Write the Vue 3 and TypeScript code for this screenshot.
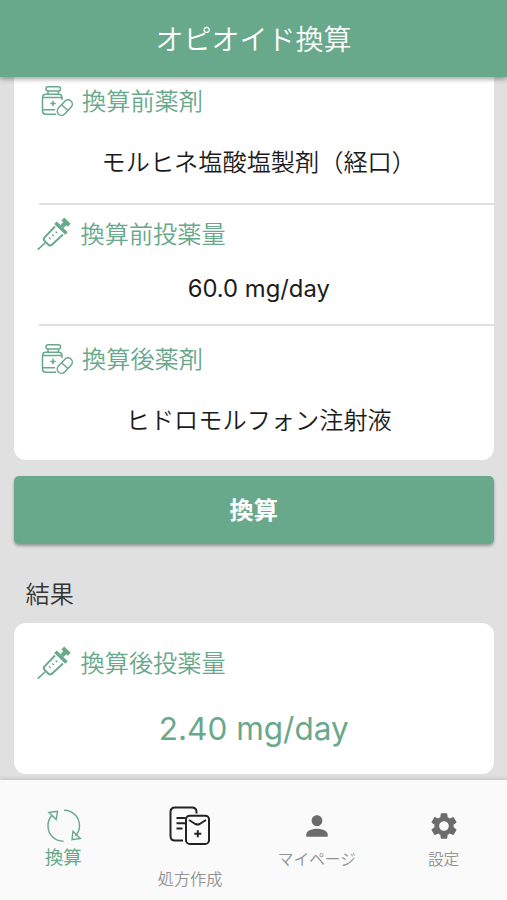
<script setup lang="ts">
import { ref } from 'vue'

interface Field {
  kind: 'drug' | 'dose'
  label: string
  value: string
}

const fields = ref<Field[]>([
  { kind: 'drug', label: '換算前薬剤', value: 'モルヒネ塩酸塩製剤（経口）' },
  { kind: 'dose', label: '換算前投薬量', value: '60.0 mg/day' },
  { kind: 'drug', label: '換算後薬剤', value: 'ヒドロモルフォン注射液' },
])
const result = ref('2.40 mg/day')
</script>

<template>
  <div class="screen">
    <header class="app-bar"><h1>オピオイド換算</h1></header>

    <main class="content">
      <section class="card inputs">
        <div v-for="(field, i) in fields" :key="field.label" class="field" :class="['field-' + i, field.kind]">
          <div class="label">
            <svg v-if="field.kind === 'drug'" class="icon" viewBox="0 0 34 32">
              <rect x="6" y="1.8" width="14.5" height="4.2" rx="2" />
              <path d="M8 6v3.2M18.5 6v3.2M22 15v-2.3q0-3.5-3.5-3.5H6q-3.500 0-3.500 3.500V26q0 3.200 3.200 3.200H16M2.500 12.500H22M2.500 24.800H15M13 15.800v5.400M10.300 18.500h5.400" />
              <rect x="15.800" y="18.300" width="18" height="8.600" rx="4.300" transform="rotate(-47 24.800 22.600)" />
              <path d="m21.600 19.700 6.300 5.800" />
            </svg>
            <svg v-else class="icon" viewBox="0 0 36 36">
              <path d="M.8 33.700 8.500 26.500" stroke-width="1.700" />
              <path d="M18 10.500 7.800 21.200q-2 2 0 4l3.400 3.300q2 2 4 0L26 18.500" stroke-width="1.900" />
              <path d="m18.500 6.800 11 10.700" stroke-width="3.600" />
              <path d="m25 10.500 4-4" stroke-width="4.500" />
              <path d="m25.800 3 6.400 6.200" stroke-width="4" />
              <path d="m12 21.500 1.600 1.600M15.300 18.500l1.600 1.600M18.600 15.500l1.600 1.600" stroke-width="1.300" />
            </svg>
            <span>{{ field.label }}</span>
          </div>
          <p class="value">{{ field.value }}</p>
        </div>
      </section>

      <button class="convert" type="button">換算</button>

      <h2>結果</h2>
      <section class="card result">
        <div class="label">
          <svg class="icon" viewBox="0 0 36 36">
            <path d="M.8 33.700 8.500 26.500" stroke-width="1.700" />
            <path d="M18 10.500 7.800 21.200q-2 2 0 4l3.400 3.300q2 2 4 0L26 18.500" stroke-width="1.900" />
            <path d="m18.500 6.800 11 10.700" stroke-width="3.600" />
            <path d="m25 10.500 4-4" stroke-width="4.500" />
            <path d="m25.800 3 6.400 6.200" stroke-width="4" />
            <path d="m12 21.500 1.600 1.600M15.300 18.500l1.600 1.600M18.600 15.500l1.600 1.600" stroke-width="1.300" />
          </svg>
          <span>換算後投薬量</span>
        </div>
        <p class="value">{{ result }}</p>
      </section>
    </main>

    <nav class="tabs">
      <a class="tab active">
        <svg class="cycle" viewBox="0 0 36 36">
          <path d="M18 2.200c9 0 15.500 6.800 15.500 15.500 0 4-1.500 7.500-4 10.300M17.500 33.200C8.500 33.200 2 26.500 2 17.800c0-4.200 1.600-8 4.300-10.800" />
          <path d="m3 4.500 8.500-1.200-1.300 8.200zM27 23.300l-1 8.400 8.300-1.200z" />
        </svg>
        <span>換算</span>
      </a>
      <a class="tab prescription">
        <svg class="docs" viewBox="0 0 44 42">
          <path d="M15 35.500H7q-4.500 0-4.500-4.500V7q0-4.500 4.500-4.500h17q4.500 0 4.500 4.500v1.500M8.500 13h9M8.500 18.200H17M8.500 23.500h6" />
          <rect x="18" y="10.700" width="23" height="28.300" rx="3.800" />
          <path d="m21 15 6.300 4q2.200 1.200 4.400 0l6.300-4M29.800 25.200v7M26.300 28.700h7" />
        </svg>
        <span>処方作成</span>
      </a>
      <a class="tab">
        <svg class="material" viewBox="0 0 24 24">
          <path d="M12 12c2.210 0 4-1.790 4-4s-1.790-4-4-4-4 1.790-4 4 1.790 4 4 4zm0 2c-2.670 0-8 1.340-8 4v2h16v-2c0-2.660-5.330-4-8-4z" />
        </svg>
        <span>マイページ</span>
      </a>
      <a class="tab">
        <svg class="material" viewBox="0 0 24 24">
          <path d="M19.140 12.940c.04-.3.060-.61.060-.94s-.02-.64-.07-.94l2.030-1.580c.18-.14.230-.41.120-.61l-1.920-3.320c-.12-.22-.37-.29-.59-.22l-2.390.96c-.5-.38-1.030-.7-1.620-.94l-.36-2.540c-.04-.24-.24-.41-.48-.41h-3.840c-.24 0-.43.170-.47.410l-.36 2.540c-.59.240-1.130.570-1.620.940l-2.390-.96c-.22-.08-.47 0-.59.220L2.740 8.870c-.12.210-.08.470.120.610l2.030 1.580c-.05.300-.09.630-.09.940s.02.640.070.940l-2.030 1.580c-.18.140-.23.410-.12.610l1.920 3.320c.12.220.37.290.59.220l2.390-.96c.5.380 1.030.700 1.620.940l.36 2.540c.05.240.24.410.48.410h3.840c.24 0 .44-.17.470-.41l.36-2.540c.59-.24 1.130-.56 1.620-.94l2.390.96c.22.080.47 0 .59-.22l1.920-3.320c.12-.22.070-.47-.12-.61l-2.010-1.580zM12 15.600c-1.980 0-3.600-1.620-3.600-3.600s1.620-3.600 3.600-3.600 3.600 1.620 3.600 3.600-1.620 3.600-3.600 3.600z" />
        </svg>
        <span>設定</span>
      </a>
    </nav>
  </div>
</template>

<style>
body {
  margin: 0;
  background: #e0e0e0;
}
</style>

<style scoped>
.screen {
  display: flex;
  flex-direction: column;
  width: 100%;
  height: 900px;
  overflow: hidden;
  background: #e0e0e0;
  font-family: Inter, "Noto Sans CJK JP", sans-serif;
}
h1, h2, p { margin: 0; font-weight: 400; }
.app-bar {
  z-index: 1;
  flex: none;
  box-sizing: border-box;
  height: 77px;
  padding-top: 20px;
  background: #68a88b;
  box-shadow: 0 2px 5px rgba(0, 0, 0, .38);
  text-align: center;
}
h1 { color: #fff; font-size: 28px; font-weight: 350; line-height: 40px; }
.content {
  flex: 1;
  min-height: 0;
  padding: 0 13.500px 0 14px;
}
.card { background: #fff; overflow: hidden; }
.inputs { height: 383px; border-radius: 0 0 12px 12px; }
.field {
  box-sizing: border-box;
  margin-left: 25px;
}
.field-0 { height: 128px; padding-top: 7px; border-bottom: 2px solid #e0e0e0; }
.field-1 { height: 121px; padding-top: 12px; border-bottom: 2px solid #e0e0e0; }
.field-2 { height: 134px; padding-top: 16px; }
.label {
  display: flex;
  align-items: center;
  gap: 8px;
  height: 36px;
  color: #68a88b;
  font-size: 24.200px;
  font-weight: 350;
  line-height: 36px;
}
.icon {
  flex: none;
  width: 36px;
  height: 36px;
  margin: -2px 0 0 -2.500px;
  fill: none;
  stroke: #68a88b;
  stroke-width: 1.500;
}
.drug .icon { width: 34px; height: 32px; margin-left: 1px; }
.value {
  margin-left: -25px;
  padding-left: 10px;
  color: #1c1c1c;
  font-size: 24.200px;
  line-height: 36px;
  text-align: center;
}
.field-0 .value, .field-2 .value { padding-top: 25px; font-weight: 350; }
.field-1 .value { padding-top: 18px; font-size: 23.800px; }
.convert {
  display: block;
  width: 100%;
  height: 68px;
  margin-top: 16px;
  padding: 1px 0 0;
  border: 0;
  border-radius: 5px;
  background: #68a88b;
  box-shadow: 0 2px 3px rgba(0, 0, 0, .32);
  color: #fff;
  font: 700 24.200px/67px Inter, "Noto Sans CJK JP", sans-serif;
}
h2 {
  height: 36px;
  margin: 33px 0 10px 11.500px;
  color: #363636;
  font-size: 24.200px;
  font-weight: 350;
  line-height: 36px;
}
.result {
  box-sizing: border-box;
  height: 151px;
  padding: 23px 0 0 25px;
  border-radius: 12px;
}
.result .value {
  padding: 23px 0 0;
  color: #68a88b;
  font-size: 31.500px;
  line-height: 48px;
}
.tabs {
  z-index: 1;
  display: grid;
  grid-template-columns: repeat(4, 1fr);
  flex: none;
  height: 120px;
  background: #fafafa;
  box-shadow: 0 -1px 4px rgba(0, 0, 0, .16);
  color: #929292;
}
.tab {
  display: flex;
  flex-direction: column;
  align-items: center;
  font-size: 15.700px;
  font-weight: 350;
  line-height: 24px;
}
.tab.active { color: #68a88b; font-size: 18.500px; font-weight: 400; }
.cycle {
  width: 36px;
  height: 36px;
  margin: 28px 0 1px 1px;
  fill: none;
  stroke: #68a88b;
  stroke-width: 1.400;
}
.docs {
  width: 44px;
  height: 42px;
  margin: 25px 0 20px;
  fill: none;
  stroke: #222;
  stroke-width: 2;
}
.prescription { font-size: 16.200px; }
.material {
  width: 32px;
  height: 32px;
  margin: 30px 0 6px;
  fill: #6b6b6b;
}
</style>
